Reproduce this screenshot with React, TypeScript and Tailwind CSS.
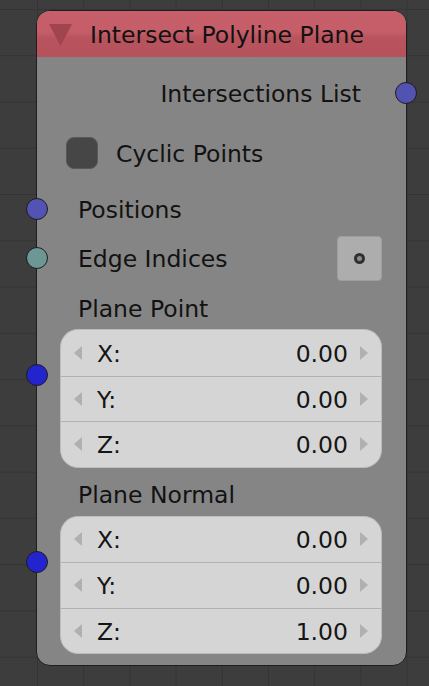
import React from 'react';

type Vec = { label: string; value: string }[];

const planePoint: Vec = [
  { label: 'X:', value: '0.00' },
  { label: 'Y:', value: '0.00' },
  { label: 'Z:', value: '0.00' },
];

const planeNormal: Vec = [
  { label: 'X:', value: '0.00' },
  { label: 'Y:', value: '0.00' },
  { label: 'Z:', value: '1.00' },
];

// круглый сокет на краю ноды
const Socket = ({ color, side }: { color: string; side: 'left' | 'right' }) => (
  <div
    className={`absolute top-1/2 h-[22px] w-[22px] -translate-y-1/2 rounded-full border border-[#1c1c1c] ${
      side === 'left' ? 'left-[-11px]' : 'right-[-11px]'
    } ${color}`}
  />
);

const Arrow = ({ dir }: { dir: 'left' | 'right' }) => (
  <svg width="10" height="14" viewBox="0 0 10 14" className="shrink-0">
    {dir === 'left' ? (
      <polygon points="9,0 9,14 1,7" fill="#b0b0b0" />
    ) : (
      <polygon points="1,0 1,14 9,7" fill="#b0b0b0" />
    )}
  </svg>
);

const VectorBox = ({ rows }: { rows: Vec }) => (
  <div className="ml-[23px] mr-[24px] overflow-hidden rounded-[18px] border border-[#bcbcbc] bg-[#d5d5d5]">
    {rows.map((r, i) => (
      <div
        key={r.label}
        className={`flex h-[45.5px] items-center px-[12px] text-[#151515] ${
          i > 0 ? 'border-t border-[#b1b1b1]' : ''
        }`}
      >
        <Arrow dir="left" />
        <span className="ml-[14px] pt-[3px]">{r.label}</span>
        <span className="ml-auto pt-[3px]">{r.value}</span>
        <span className="ml-[11px]">
          <Arrow dir="right" />
        </span>
      </div>
    ))}
  </div>
);

export default function App() {
  return (
    <div
      className="min-h-screen w-full bg-[#3d3d3d] pl-[36px] pt-[10px] text-[23.5px] leading-none text-[#121212] [background-image:linear-gradient(to_right,#343434_1px,transparent_1px),linear-gradient(to_bottom,#343434_1px,transparent_1px)] [background-position:37px_9px] [background-size:46.2px_46.27px]"
      style={{ fontFamily: '"DejaVu Sans", Verdana, sans-serif' }}
    >
      <div className="relative w-[371px] rounded-[14px] border border-[#1e1e1e] bg-[#858585] pb-[11px]">
        {/* Заголовок */}
        <div className="flex h-[46px] items-center rounded-t-[13px] bg-[linear-gradient(to_bottom,#c75f6a_0%,#c55e68_45%,#b9545e_58%,#b6525c_100%)]">
          <svg width="23" height="23" viewBox="0 0 23 23" className="ml-[12px]">
            <polygon points="0,1 23,1 11.5,23" fill="#a0444e" />
          </svg>
          <span className="ml-[18px] pt-[4px]">Intersect Polyline Plane</span>
        </div>

        {/* Выход */}
        <div className="relative mt-[13px] flex h-[46px] items-center justify-end pr-[45px]">
          <span className="pt-[3px]">Intersections List</span>
          <Socket side="right" color="bg-[#5252b0]" />
        </div>

        {/* Чекбокс */}
        <div className="mt-[14px] flex h-[46px] items-center pl-[29px]">
          <div className="h-[32px] w-[32px] rounded-[8px] border border-[#585858] bg-[#464646]" />
          <span className="ml-[18px] pt-[3px]">Cyclic Points</span>
        </div>

        {/* Входы */}
        <div className="relative mt-[10px] flex h-[46px] items-center pl-[41px]">
          <span className="pt-[3px]">Positions</span>
          <Socket side="left" color="bg-[#5353b3]" />
        </div>
        <div className="relative mt-[3px] flex h-[46px] items-center pl-[41px] pr-[24px]">
          <span className="pt-[3px]">Edge Indices</span>
          <div className="ml-auto flex h-[45px] w-[45px] items-center justify-center rounded-[4px] border border-[#9e9e9e] bg-[#adadad]">
            <div className="h-[11px] w-[11px] rounded-full border-[3px] border-[#303030] bg-[#8c8c8c]" />
          </div>
          <Socket side="left" color="bg-[#6b9894]" />
        </div>

        <div className="mt-[9px] flex h-[36px] items-center pl-[41px]">
          <span className="pt-[3px]">Plane Point</span>
        </div>
        <div className="relative mt-[3px]">
          <VectorBox rows={planePoint} />
          <div className="absolute left-0 top-[46px] h-0 w-0">
            <div className="absolute left-[-11px] top-[-11px] h-[22px] w-[22px] rounded-full border border-[#1c1c1c] bg-[#2424cf]" />
          </div>
        </div>

        <div className="mt-[9px] flex h-[36px] items-center pl-[41px]">
          <span className="pt-[3px]">Plane Normal</span>
        </div>
        <div className="relative mt-[3px]">
          <VectorBox rows={planeNormal} />
          <div className="absolute left-0 top-[46px] h-0 w-0">
            <div className="absolute left-[-11px] top-[-11px] h-[22px] w-[22px] rounded-full border border-[#1c1c1c] bg-[#2424cf]" />
          </div>
        </div>
      </div>
    </div>
  );
}
